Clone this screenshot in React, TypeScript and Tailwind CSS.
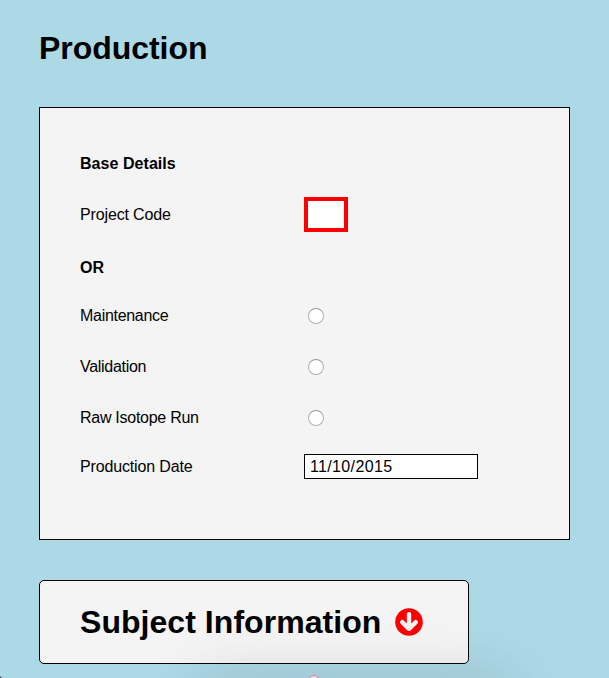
import type { ReactNode } from 'react';

function Row({ label, className, labelClass, children }: { label: string; className: string; labelClass: string; children?: ReactNode }) {
  return (
    <div className={`flex items-center ${className}`}>
      <div className="w-[224px] shrink-0">
        <span className={`whitespace-nowrap ${labelClass}`}>{label}</span>
      </div>
      {children}
    </div>
  );
}

function Radio() {
  return (
    <span className="ml-1 h-4 w-4 rounded-full border border-[#b0b0b0] border-t-[#999999] bg-white" />
  );
}

export default function App() {
  return (
    <main className="relative h-[678px] w-[609px] overflow-hidden bg-[#add8e6] px-[39px] font-['Liberation_Sans',Arial,sans-serif] text-[16px] leading-5 text-black">
      <h1 className="h-[107px] pt-7 text-[32px] leading-10 font-bold tracking-[-0.05px]">Production</h1>
      <section className="h-[433px] w-[531px] border border-black bg-[#f4f4f4] px-10 pt-10">
        <Row label="Base Details" className="h-[31px]" labelClass="font-bold tracking-[0.05px]" />
        <Row label="Project Code" className="h-[71px]" labelClass="tracking-[-0.14px]">
          <div className="h-[35px] w-11 border-4 border-[#ff0000] bg-white" />
        </Row>
        <Row label="OR" className="h-[34px] pt-px" labelClass="font-bold" />
        <Row label="Maintenance" className="h-16" labelClass="tracking-[-0.3px]"><Radio /></Row>
        <Row label="Validation" className="h-[38px]" labelClass="tracking-[-0.3px]"><Radio /></Row>
        <Row label="Raw Isotope Run" className="h-16" labelClass="tracking-[-0.27px]"><Radio /></Row>
        <Row label="Production Date" className="h-[33px]" labelClass="tracking-[-0.15px]">
          <div className="flex h-[25px] w-[174px] items-center border border-black bg-white pt-px pl-[5px] tracking-[0.35px]">11/10/2015</div>
        </Row>
      </section>
      <button className="mt-10 flex h-[84px] w-[430px] items-center rounded-[5px] border border-black bg-[#f4f4f4] pl-10 text-left">
        <span className="w-[315px] text-[32px] leading-10 font-bold tracking-[0.05px] whitespace-nowrap">Subject Information</span>
        <svg width="28" height="28" viewBox="0 0 28 28" fill="none">
          <circle cx="14" cy="14" r="13.8" fill="#ff0000" />
          <path d="M14 6.3v13M7.2 14.2 14 20.8l6.8-6.6" stroke="#f4f4f4" strokeWidth="4.4" strokeLinecap="round" strokeLinejoin="round" />
        </svg>
      </button>
      <div className="pointer-events-none absolute top-[696px] left-[215px] h-5 w-[280px] rounded-full shadow-[0_0_55px_20px_rgba(70,80,85,0.18)]" />
      <div className="absolute top-[675px] left-[308px] h-3 w-3 rounded-full border border-[#d98489] bg-[#f2dce2]" />
      <svg className="absolute bottom-0 left-0" width="3" height="3">
        <path d="M0 0Q0 3 3 3H0Z" fill="#1f292c" />
      </svg>
    </main>
  );
}
